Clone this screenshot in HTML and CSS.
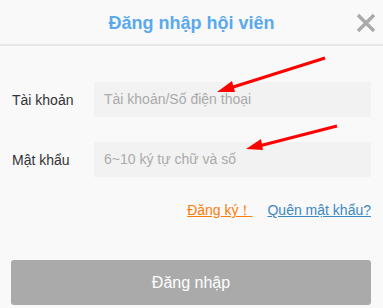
FILE: index.html
```html
<!DOCTYPE html>
<html lang="vi">
<head>
    <meta charset="UTF-8">
    <title>Đăng nhập hội viên</title>
    <link rel="stylesheet" href="styles.css">
</head>
<body>
  <div class="wrap">
    <div class="head">
      <h1 class="title">Đăng nhập hội viên</h1>
      <span class="close">
        <svg width="20" height="20" viewBox="0 0 20 20">
          <path d="M2 2 L18 18 M18 2 L2 18" stroke="#aaaaaa" stroke-width="3.4"/>
        </svg>
      </span>
    </div>
    <div class="form">
      <div class="row">
        <label>Tài khoản</label>
        <div class="input">Tài khoản/Số điện thoại</div>
      </div>
      <div class="row">
        <label>Mật khẩu</label>
        <div class="input">6~10 ký tự chữ và số</div>
      </div>
      <div class="links">
        <a class="reg">Đăng ký！</a>
        <a class="forgot">Quên mật khẩu?</a>
      </div>
      <div class="btn">Đăng nhập</div>
    </div>
    <svg class="marks" width="383" height="308" viewBox="0 0 383 308">
      <line x1="325" y1="58" x2="230" y2="88" stroke="#ff0000" stroke-width="3"/>
      <polygon points="217,92 232,81 235,92" fill="#ff0000"/>
      <line x1="337" y1="126" x2="259" y2="146" stroke="#ff0000" stroke-width="3"/>
      <polygon points="246,149 261,139 263,150" fill="#ff0000"/>
    </svg>
  </div>
</body>
</html>
```

FILE: styles.css
```css
* {
  margin: 0px;
  padding: 0px;
  box-sizing: border-box;
}
body {
  background-color: #f9f9f9;
  font-family: "Liberation Sans", Arial, sans-serif;
}
.wrap {
  position: relative;
  width: 383px;
  height: 308px;
  overflow: hidden;
}
.head {
  position: relative;
  height: 46px;
  border-bottom: 2px solid #e6e6e6;
  display: flex;
  align-items: center;
  justify-content: center;
}
.title {
  font-size: 18px;
  font-weight: bold;
  color: #5aa9ec;
  padding-top: 2px;
}
.close {
  position: absolute;
  right: 7px;
  top: 13px;
  width: 20px;
  height: 20px;
}
.form {
  padding: 36px 12px 0 12px;
}
.row {
  display: flex;
  align-items: center;
  height: 35px;
  margin-bottom: 25px;
}
.row label {
  width: 82px;
  font-size: 14px;
  color: #333;
}
.input {
  flex-grow: 1;
  height: 35px;
  line-height: 35px;
  background-color: #f2f2f2;
  padding-left: 10px;
  font-size: 14px;
  color: #aaa;
}
.links {
  display: flex;
  justify-content: flex-end;
  gap: 15px;
  margin-top: 2px;
  height: 20px;
  font-size: 14px;
}
.links a {
  text-decoration: underline;
}
.reg {
  color: #fb7c0a;
}
.forgot {
  color: #3c88c3;
}
.btn {
  margin-top: 38px;
  margin-left: -1px;
  height: 45px;
  line-height: 45px;
  border-radius: 3px;
  background-color: #aaaaaa;
  color: #fff;
  text-align: center;
  font-size: 16px;
}
.marks {
  position: absolute;
  left: 0;
  top: 0;
  pointer-events: none;
}
```
